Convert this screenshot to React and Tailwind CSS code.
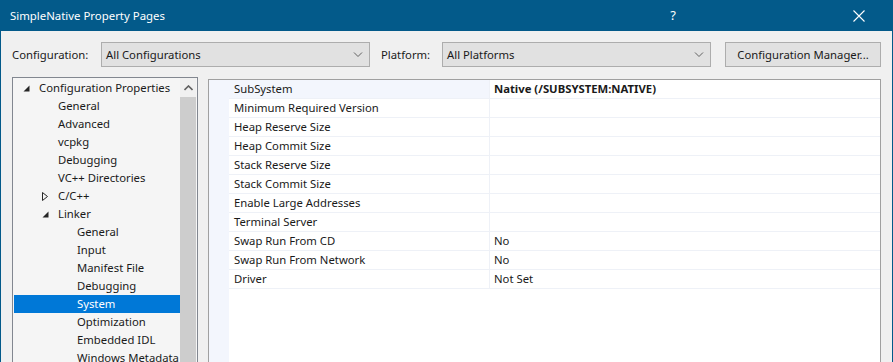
import React from "react";

const font = { fontFamily: '"Noto Sans", "Open Sans", sans-serif' };

const tree = [
  { label: "Configuration Properties", depth: 0, arrow: "open" },
  { label: "General", depth: 1 },
  { label: "Advanced", depth: 1 },
  { label: "vcpkg", depth: 1 },
  { label: "Debugging", depth: 1 },
  { label: "VC++ Directories", depth: 1 },
  { label: "C/C++", depth: 1, arrow: "closed" },
  { label: "Linker", depth: 1, arrow: "open" },
  { label: "General", depth: 2 },
  { label: "Input", depth: 2 },
  { label: "Manifest File", depth: 2 },
  { label: "Debugging", depth: 2 },
  { label: "System", depth: 2, selected: true },
  { label: "Optimization", depth: 2 },
  { label: "Embedded IDL", depth: 2 },
  { label: "Windows Metadata", depth: 2 },
];

const props = [
  ["SubSystem", "Native (/SUBSYSTEM:NATIVE)"],
  ["Minimum Required Version", ""],
  ["Heap Reserve Size", ""],
  ["Heap Commit Size", ""],
  ["Stack Reserve Size", ""],
  ["Stack Commit Size", ""],
  ["Enable Large Addresses", ""],
  ["Terminal Server", ""],
  ["Swap Run From CD", "No"],
  ["Swap Run From Network", "No"],
  ["Driver", "Not Set"],
];

const Chevron = () => (
  <svg width="10" height="6" viewBox="0 0 10 6" className="shrink-0">
    <path d="M1 0.5 L5 4.5 L9 0.5" fill="none" stroke="#606060" strokeWidth="1" />
  </svg>
);

const Combo = ({ value }) => (
  <div className="flex items-center justify-between w-[269px] h-[25px] bg-[#e1e1e1] border border-[#adadad] pl-[4px] pr-[6px]">
    <span className="pt-px">{value}</span>
    <Chevron />
  </div>
);

const Arrow = ({ type }) =>
  type === "open" ? (
    <svg width="7" height="7" viewBox="0 0 7 7">
      <path d="M6.5 0.5 L6.5 6.5 L0.5 6.5 Z" fill="#262626" />
    </svg>
  ) : (
    <svg width="6" height="9" viewBox="0 0 6 9">
      <path d="M0.5 0.5 L5.5 4.5 L0.5 8.5 Z" fill="none" stroke="#262626" strokeWidth="1" />
    </svg>
  );

const App = () => {
  return (
    <div
      className="w-[893px] h-[362px] overflow-hidden flex flex-col bg-[#f0f0f0] border-x border-[#035a8a] text-[11.3px] text-[#1a1a1a]"
      style={font}
    >
      {/* Title bar */}
      <div className="h-[31px] shrink-0 bg-[#035a8a] text-white flex items-center pl-[10px] -mx-px">
        <span className="text-[11.4px]">SimpleNative Property Pages</span>
        <span className="ml-auto mr-[177px] text-[13px]">?</span>
        <svg width="12" height="12" viewBox="0 0 12 12" className="mr-[28px]">
          <path d="M0.5 0.5 L11.5 11.5 M11.5 0.5 L0.5 11.5" stroke="white" strokeWidth="1.1" />
        </svg>
      </div>

      {/* Configuration row */}
      <div className="flex items-center pt-[11px] pl-[11px] h-[36px] shrink-0">
        <span className="w-[89px] pt-px">Configuration:</span>
        <Combo value="All Configurations" />
        <span className="ml-[11px] w-[61px] pt-px">Platform:</span>
        <Combo value="All Platforms" />
        <div className="ml-[14px] w-[156px] h-[25px] bg-[#e1e1e1] border border-[#adadad] flex items-center justify-center pt-px">
          Configuration Manager...
        </div>
      </div>

      {/* Main */}
      <div className="flex flex-1 min-h-0 pt-[10px] pl-[11px]">
        {/* Tree */}
        <div className="w-[186px] shrink-0 border border-[#828790] border-b-0 bg-[#f5f5f5] flex">
          <div className="flex-1 min-w-0 overflow-hidden pl-px pt-px">
            {tree.map((t, i) => (
              <div
                key={i}
                className={
                  "h-[18px] flex items-center pt-px " +
                  (t.selected ? "bg-[#0078d7] text-white" : "")
                }
                style={{ paddingLeft: 6 + t.depth * 19 }}
              >
                <span className="w-[19px] shrink-0 flex items-center justify-start pl-[3px]">
                  {t.arrow && <Arrow type={t.arrow} />}
                </span>
                <span className="whitespace-nowrap">{t.label}</span>
              </div>
            ))}
          </div>
          <div className="w-[16px] shrink-0 mr-px flex flex-col">
            <div className="h-[19px] bg-[#f0f0f0] flex items-center justify-center">
              <svg width="9" height="6" viewBox="0 0 9 6">
                <path d="M0.5 5 L4.5 1 L8.5 5" fill="none" stroke="#606060" strokeWidth="1.6" />
              </svg>
            </div>
            <div className="flex-1 bg-[#cdcdcd]" />
          </div>
        </div>

        {/* Property grid */}
        <div className="ml-[10px] mt-[2px] w-[673px] shrink-0 border border-[#a0a0a0] border-b-0 bg-white flex">
          <div className="w-[20px] bg-[#f3f6fd] shrink-0" />
          <div className="flex-1">
            {props.map(([name, value], i) => (
              <div key={i} className="h-[19px] flex border-b border-[#eef1f7]">
                <div
                  className={
                    "w-[261px] pl-[5px] pt-px flex items-center border-r border-[#eef1f7] " +
                    (i === 0 ? "bg-[#f3f6fd]" : "")
                  }
                >
                  {name}
                </div>
                <div className={"flex-1 pl-[4px] pt-px flex items-center " + (i === 0 ? "font-bold" : "")}>
                  {value}
                </div>
              </div>
            ))}
          </div>
        </div>
      </div>
    </div>
  );
};

export default App;
